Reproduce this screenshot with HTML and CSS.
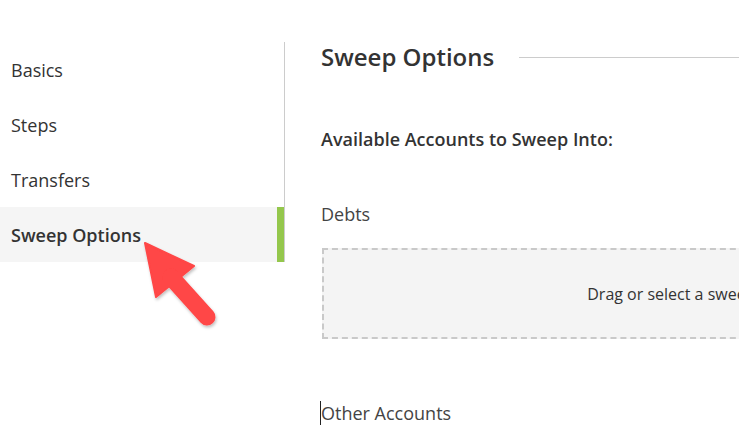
FILE: index.html
```html
<!DOCTYPE html>
<html lang="en">
<head>
  <meta charset="UTF-8">
  <meta name="viewport" content="width=device-width, initial-scale=1.0">
  <title>Sweep Options</title>
  <link rel="stylesheet" href="styles.css">
</head>
<body>
  <div class="page">
    <nav class="sidebar">
      <a class="nav-item">Basics</a>
      <a class="nav-item">Steps</a>
      <a class="nav-item">Transfers</a>
      <a class="nav-item active">Sweep Options</a>
    </nav>

    <main class="content">
      <div class="section-title">
        <h2>Sweep Options</h2>
        <span class="rule"></span>
      </div>

      <h3 class="sub-title">Available Accounts to Sweep Into:</h3>

      <p class="group-label">Debts</p>
      <div class="dropzone">
        <span>Drag or select a sweep account</span>
      </div>

      <p class="group-label other"><span class="caret"></span>Other Accounts</p>
    </main>
  </div>

  <!-- mui ten chi vao muc dang chon -->
  <svg class="pointer" width="100" height="100" viewBox="0 0 100 100">
    <defs>
      <filter id="shadow" x="-20%" y="-20%" width="140%" height="140%">
        <feDropShadow dx="1" dy="2" stdDeviation="1.5" flood-color="#000" flood-opacity="0.25"/>
      </filter>
    </defs>
    <g filter="url(#shadow)" fill="#ff4646" stroke="#ff4646">
      <polygon points="10,8 59,31 21,62" stroke-width="2" stroke-linejoin="round"/>
      <line x1="36" y1="42" x2="72" y2="82" stroke-width="17" stroke-linecap="round"/>
    </g>
  </svg>
</body>
</html>
```

FILE: styles.css
```css
* {
  margin: 0;
  padding: 0;
  box-sizing: border-box;
  font-family: "Open Sans", Arial, sans-serif;
}

body {
  background-color: #ffffff;
  color: #333333;
  width: 739px;
  height: 441px;
  overflow: hidden;
  position: relative;
}

.page {
  display: flex;
  align-items: flex-start;
}

/* Menu ben trai */
.sidebar {
  flex: 0 0 285px;
  margin-top: 42px;
  border-right: 1px solid #cccccc;
  display: flex;
  flex-direction: column;
}

.nav-item {
  height: 55px;
  display: flex;
  align-items: center;
  padding-left: 11px;
  font-size: 18px;
  color: #333333;
  cursor: pointer;
}

.nav-item.active {
  background-color: #f5f5f5;
  font-weight: 600;
  border-right: 7px solid #94c74c;
}

/* Noi dung chinh */
.content {
  flex: 0 0 auto;
  width: 800px;
  padding-left: 36px;
  padding-top: 40px;
}

.section-title {
  display: flex;
  align-items: center;
  gap: 25px;
  height: 32px;
}

.section-title h2 {
  font-size: 24px;
  font-weight: 600;
  color: #333333;
  white-space: nowrap;
}

.rule {
  flex: 1;
  height: 1px;
  background-color: #cccccc;
  margin-top: 2px;
}

.sub-title {
  font-size: 18px;
  font-weight: 600;
  color: #333333;
  margin-top: 55px;
  line-height: 24px;
}

.group-label {
  font-size: 18px;
  color: #444444;
  line-height: 24px;
  margin-top: 51px;
}

.dropzone {
  margin-top: 22px;
  margin-left: 1px;
  width: 762px;
  height: 91px;
  border: 2px dashed #c9c9c9;
  background-color: #f4f4f4;
  display: flex;
  align-items: center;
  justify-content: center;
  font-size: 16px;
  color: #333333;
}

.group-label.other {
  margin-top: 62px;
  position: relative;
}

.caret {
  position: absolute;
  left: -1px;
  top: 0;
  width: 1px;
  height: 24px;
  background-color: #222222;
}

.pointer {
  position: absolute;
  left: 135px;
  top: 235px;
}
```
